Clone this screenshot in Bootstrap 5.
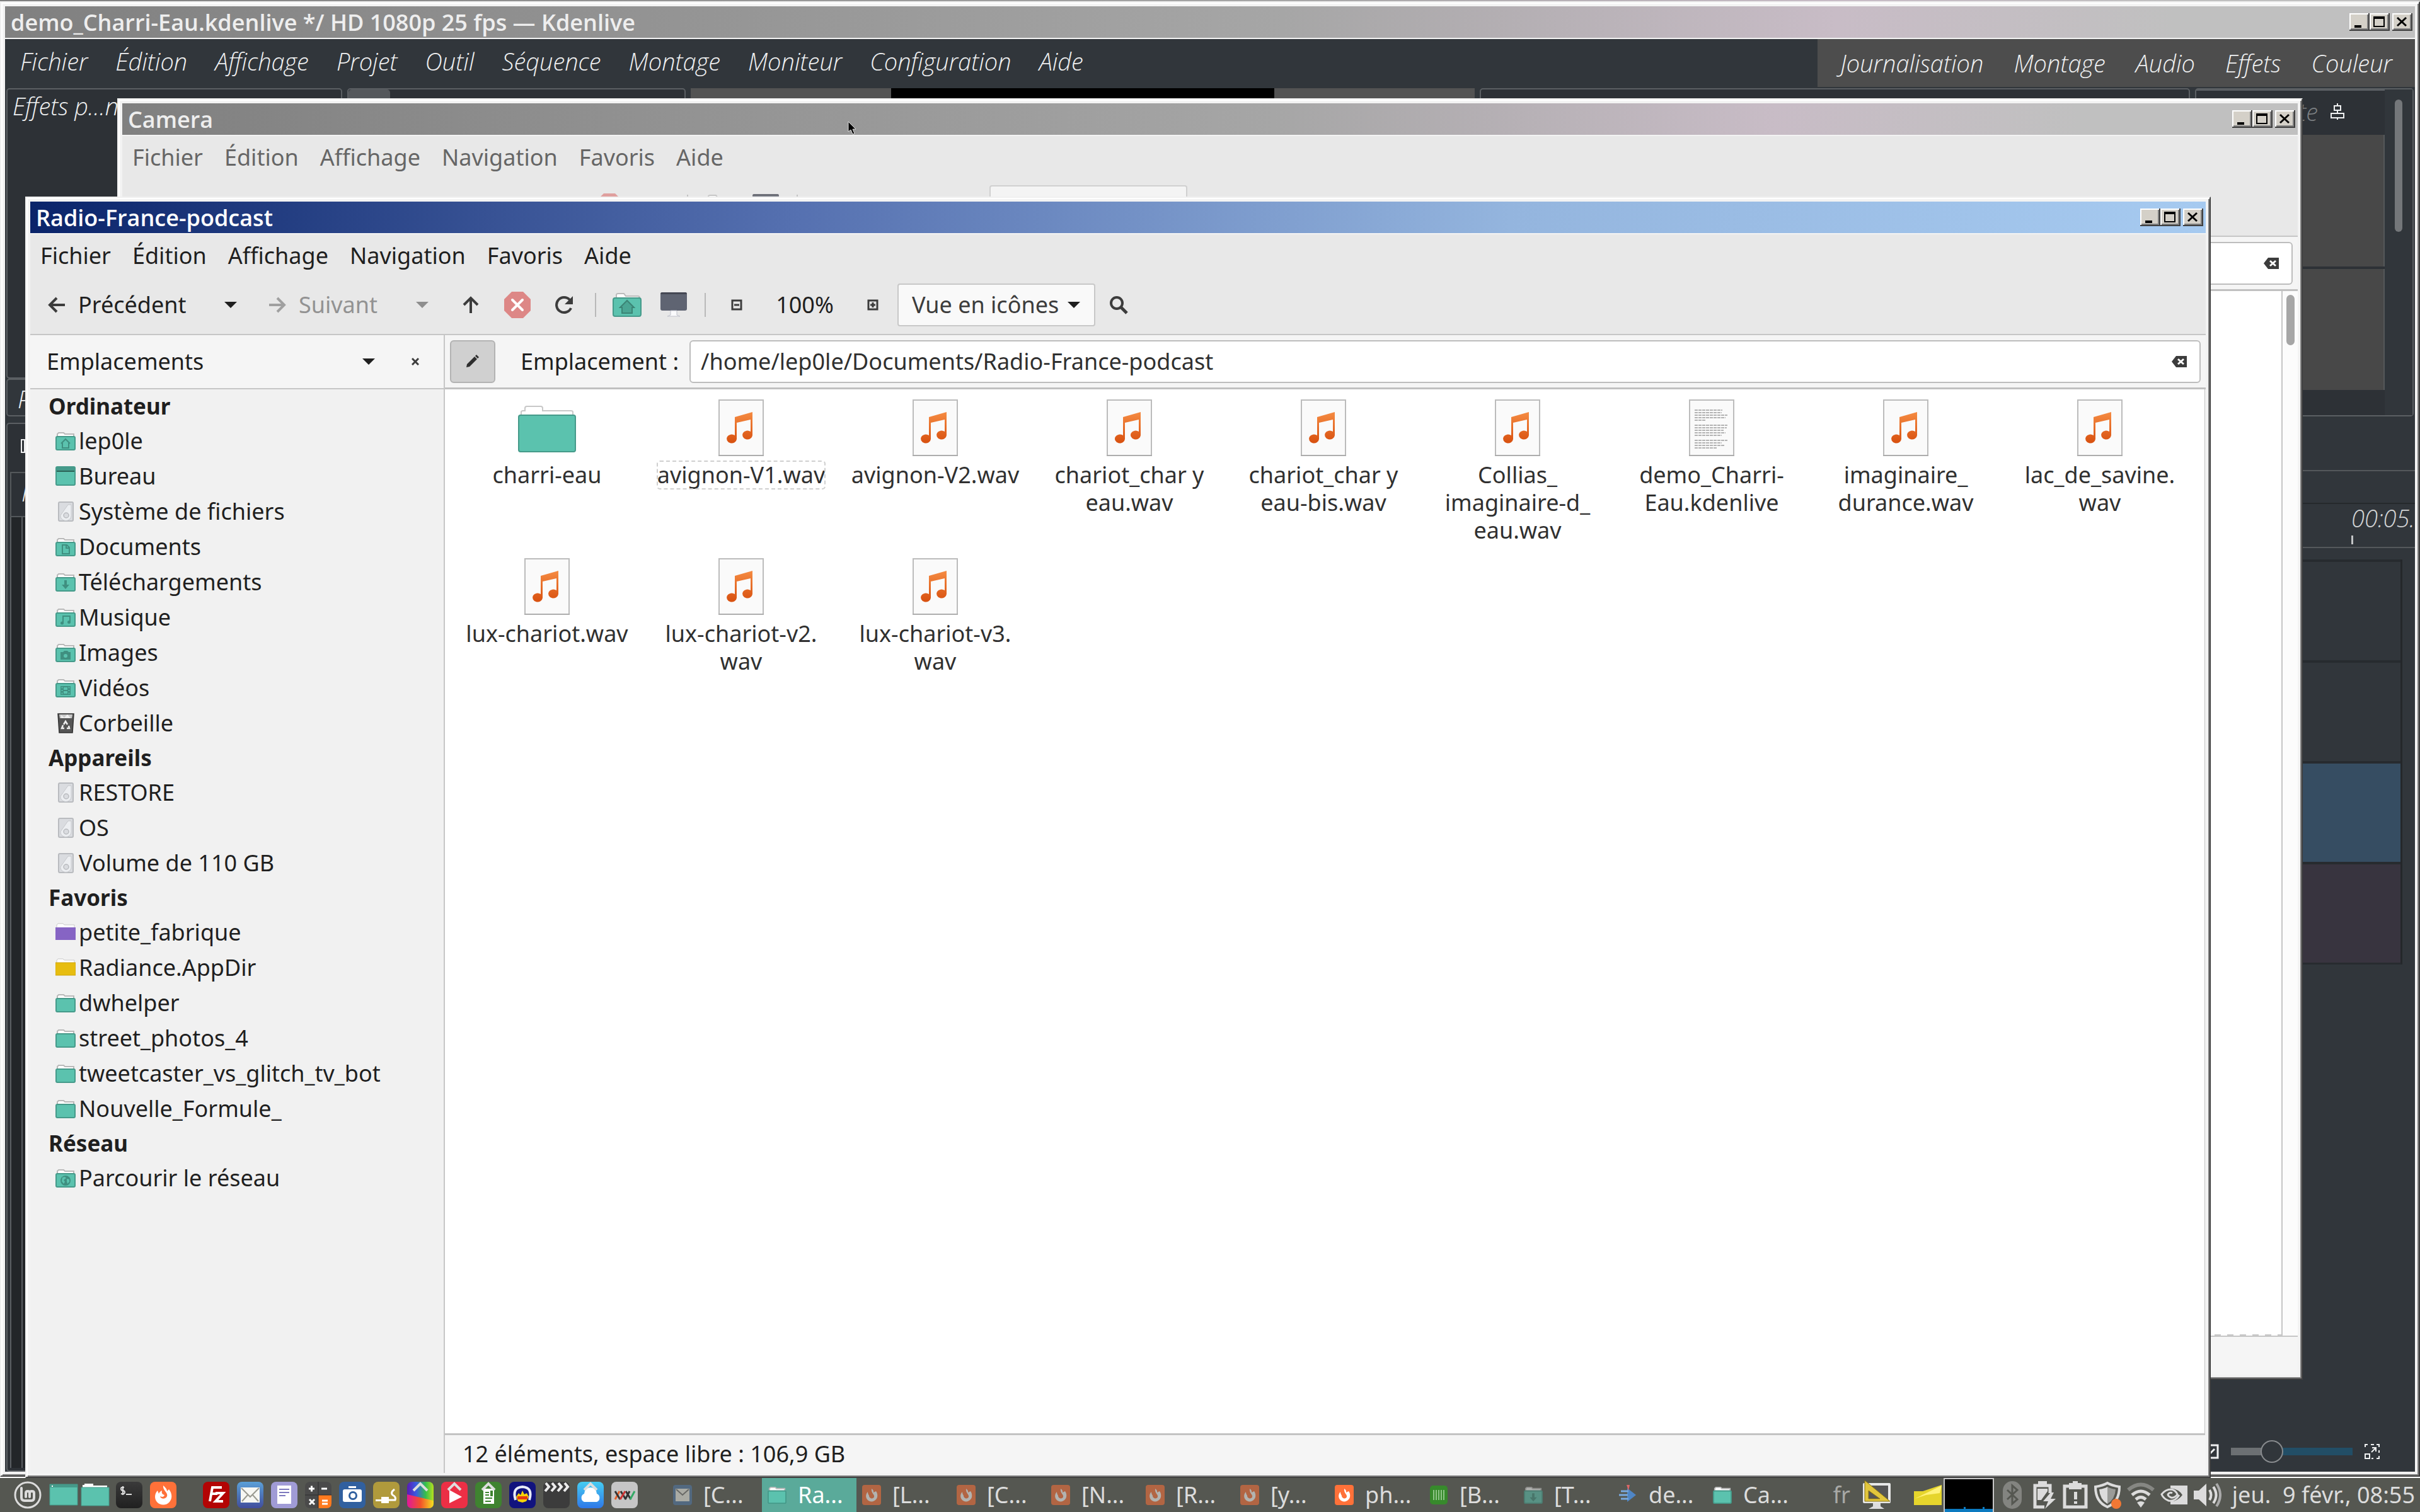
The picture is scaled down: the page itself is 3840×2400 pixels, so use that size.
<!DOCTYPE html>
<html lang="fr">
<head>
<meta charset="utf-8">
<meta name="viewport" content="width=device-width, initial-scale=1">
<title>Bureau</title>
<link href="https://cdn.jsdelivr.net/npm/bootstrap@5.3.0/dist/css/bootstrap.min.css" rel="stylesheet">
<style>
body { font-family: "Noto Sans", sans-serif; font-size: 36px; line-height: 44px; color: #1f1f1f; background: #555751; overflow: hidden; }
button, input, select { font: inherit; color: inherit; }
a { color: inherit; text-decoration: none; }
svg { display: block; flex: none; }
.desk { background: linear-gradient(90deg, #808080, #a6a6a6 53%, #c8bcc6 76%, #c0c0c0 90%); }
.deskline { height: 2px; background: #fff; }

/* window frame */
.win { position: absolute; border: 2px solid; border-color: #f0f0f0 #404040 #404040 #f0f0f0; background: #f3f3f3; padding: 6px; box-shadow: inset 2px 2px #fff, inset -2px -2px #808080; }
.win-kden { inset: 2px 0 2px 0; }
.win-camera { inset: 156px 186px 156px 186px; }
.win-radio { inset: 312px 332px 0 40px; }
.titlebar { height: 50px; padding: 0 4px 0 9px; margin-bottom: 2px; background: linear-gradient(90deg, #808080, #a6a6a6 53%, #c8bcc6 76%, #c0c0c0 90%); color: #eee; font-family: "Open Sans", sans-serif; font-weight: 600; font-size: 36px; }
.wintitle { padding-top: 2px; }
.win-radio .titlebar { background: linear-gradient(90deg, #0a246a, #5570b0 35%, #94b5de 68%, #a6caf0); color: #fff; }
.winbtn { border: 0; padding: 0; background: none; }

/* file manager */
.menus { height: 68px; gap: 34px; padding-left: 16px; background: #e8e8e8; }
.tools { height: 90px; background: #e8e8e8; padding-bottom: 2px; }
.tools button { border: 0; background: none; height: 68px; padding: 0; }
.tb { width: 74px; display: flex; align-items: center; justify-content: center; }
.tb-drop { width: 80px; }
.tb-prev { width: 278px; display: flex; align-items: center; gap: 20px; padding-left: 28px !important; }
.tb-next { width: 224px; display: flex; align-items: center; gap: 20px; padding-left: 20px !important; color: #929292; }
.tb-zoom { width: 142px; text-align: center; }
.tb-sep { width: 2px; height: 38px; margin: 0 12px; background: #b9b9b9; }
.view-box { width: 314px; margin-left: 2px; }
.view-box select { appearance: none; width: 100%; height: 68px; padding: 0 21px; border: 2px solid #c8c8c8; border-radius: 4px; background: #f9f9f9; color: #3c3c3c; }
.view-box svg { position: absolute; right: 24px; top: 29px; pointer-events: none; }
.paneline { border-top: 2px solid #c6c6c6; }
.side { width: 658px; border-right: 2px solid #c6c6c6; background: #f1f1f1; }
.side-head { height: 86px; background: #f5f5f5; border-bottom: 2px solid #c6c6c6; padding: 0 8px 0 26px; }
.side-head button { border: 0; background: none; padding: 0; display: flex; align-items: center; justify-content: center; width: 74px; height: 68px; }
.side h2 { font-size: 35px; font-weight: 700; line-height: 54px; margin: 0; padding-left: 29px; }
.side li a { display: flex; align-items: center; height: 56px; gap: 5px; padding-left: 40px; }
.side li svg { width: 32px; height: 32px; }
.loc { height: 86px; background: #f5f5f5; border-bottom: 3px solid #c0c0c0; padding: 0 8px; }
.loc-toggle { width: 72px; height: 68px; border: 2px solid #b3b3b3; border-radius: 6px; background: #d0d0d0; padding: 0; display: flex; align-items: center; justify-content: center; }
.loc label { width: 308px; padding-left: 40px; }
.loc-box { height: 68px; border: 2px solid #bdbdbd; border-radius: 6px; background: #fff; padding: 0 20px 0 16px; }
.loc-box input { border: 0; outline: 0; background: none; padding: 0; color: #303030; }
.loc-box button { border: 0; background: none; padding: 0; }
.pane { background: #fff; border-bottom: 3px solid #c3c3c3; border-right: 1px solid #c3c3c3; margin-right: 1px; }
.files { padding: 16px 0 0 8px; }
.file { width: 308px; height: 252px; color: #303030; text-align: center; }
.file svg { margin: 0 auto 8px; position: relative; }
.file span { display: inline-block; }
.file .focus { outline: 2px dashed #cfcfcf; outline-offset: -1px; border-radius: 4px; }
.status { height: 60px; line-height: 60px; background: #f5f5f5; padding-left: 28px; }
.win-camera .menus { color: #666; }
.win-camera .tools { opacity: .75; background: #e8e8e8; }
.scroll { width: 26px; border-left: 2px solid #c6c6c6; background: #fcfcfc; padding: 6px 5px 0 6px; }
.scroll i { display: block; height: 80px; border-radius: 7px; background: #a6a6a6; }
.dashline { height: 2px; background: repeating-linear-gradient(90deg, #c8c8c8 0 10px, #fff 10px 20px); }

/* video editor */
.kd { background: #31363b; color: #eff0f1; font-family: "Open Sans", sans-serif; font-style: italic; font-weight: 300; font-size: 38px; }
.kd-menus { gap: 44px; padding: 13px 0 0 24px; }
.kd-modes { height: 76px; gap: 48px; padding: 0 36px; background: #4d4d4d; }
.kd-upper { height: 523px; gap: 8px; padding: 2px 2px 0; }
.kd-panel { border: 2px solid #5b5f63; border-radius: 5px; background: #2d3136; }
.kd-left { width: 533px; }
.kd-grey { background: #535353; }
.kd-screen { width: 608px; background: #000; }
.kd-clip { width: 169px; margin-top: 14px; border: 3px solid #24272a; background: #31363b; }
.kd-right { width: 347px; }
.kd-right .tophead { height: 68px; padding-right: 64px; gap: 20px; color: #7b7f82; border-top: 2px solid #5b5f63; }
.kd-cell { background: #484848; border-right: 2px solid #55585a; height: 209px; }
.kd-thumb { width: 12px; height: 210px; border-radius: 6px; background: #74777a; }
.kd-track { height: 160px; border-top: 4px solid #272b2f; }
.kd-tracks { margin: 18px 20px 0 0; border-right: 3px solid #24272a; border-bottom: 3px solid #272b2f; }
.kd-ruler { height: 72px; border-top: 2px solid #25292c; border-bottom: 2px solid #54585b; color: #d3d5d6; }
.kd-tl { width: 720px; margin: 10px 0 0 2px; border: 2px solid #5b5f63; border-right: 0; border-radius: 5px; background: #2d3136; }
.kd-slider { width: 193px; height: 36px; appearance: none; margin: 0; background: linear-gradient(90deg, #6c7073 0 33%, #224e66 33%) center / 100% 12px no-repeat; }
.kd-slider::-webkit-slider-thumb { appearance: none; width: 36px; height: 36px; border-radius: 50%; border: 2px solid #888b8e; background: #31363b; }
.cursor { position: absolute; left: 1345px; top: 192px; }

/* taskbar */
.bar { height: 54px; background: #555751; color: #dcdcdc; padding: 0 8px 0 22px; }
.bar button { border: 0; background: none; padding: 0; }
.launch { gap: 12px; }
.tasks { margin-left: 47px; }
.task { width: 150px; height: 54px; display: flex; align-items: center; gap: 18px; padding-left: 9px !important; white-space: nowrap; text-align: left; }
.task.min svg { opacity: .55; }
.task.on { background: #5aaa9a; color: #fff; }
.tray { gap: 9px; }
</style>
</head>
<body class="d-flex flex-column vh-100">
<svg width="0" height="0" style="position:absolute" aria-hidden="true">
  <defs>
    <linearGradient id="gOr" x1="0" y1="0" x2="0" y2="1"><stop offset="0" stop-color="#f58b42"/><stop offset="1" stop-color="#d8500f"/></linearGradient>
    <linearGradient id="gRain" x1="0" y1="0" x2="1" y2="0"><stop offset="0" stop-color="#5a1bb5"/><stop offset=".35" stop-color="#3a5be0"/><stop offset=".7" stop-color="#35c04a"/><stop offset="1" stop-color="#b6e01f"/></linearGradient>
    <linearGradient id="gRain2" x1="0" y1="0" x2="1" y2="0"><stop offset="0" stop-color="#e0189a"/><stop offset=".5" stop-color="#f2502a"/><stop offset="1" stop-color="#f5e020"/></linearGradient>
    <linearGradient id="gDk" x1="0" y1="0" x2="0" y2="1"><stop offset="0" stop-color="#3a3a3a"/><stop offset="1" stop-color="#202020"/></linearGradient>
    <linearGradient id="gBl" x1="0" y1="0" x2="0" y2="1"><stop offset="0" stop-color="#5aa0d8"/><stop offset="1" stop-color="#414d9c"/></linearGradient>
    <linearGradient id="gSky" x1="0" y1="0" x2="0" y2="1"><stop offset="0" stop-color="#45cdf2"/><stop offset="1" stop-color="#2f78e8"/></linearGradient>
  </defs>
  <symbol id="min" viewBox="0 0 32 28"><path fill="#d4d0c8" d="M0 0h32v28H0z"/><path fill="#fff" d="M0 0h30v2H2v24H0z"/><path fill="#404040" d="M30 0h2v28H0v-2h30z"/><path fill="#808080" d="M28 2h2v24H2v-2h26z"/><path d="M8 19h11v4H8z"/></symbol>
  <symbol id="max" viewBox="0 0 32 28"><path fill="#d4d0c8" d="M0 0h32v28H0z"/><path fill="#fff" d="M0 0h30v2H2v24H0z"/><path fill="#404040" d="M30 0h2v28H0v-2h30z"/><path fill="#808080" d="M28 2h2v24H2v-2h26z"/><path d="M6 5h18v17H6zM8 9v11h14V9z" fill-rule="evenodd"/></symbol>
  <symbol id="cls" viewBox="0 0 32 28"><path fill="#d4d0c8" d="M0 0h32v28H0z"/><path fill="#fff" d="M0 0h30v2H2v24H0z"/><path fill="#404040" d="M30 0h2v28H0v-2h30z"/><path fill="#808080" d="M28 2h2v24H2v-2h26z"/><path stroke="#000" stroke-width="3" d="M8 7l14 13M22 7L8 20"/></symbol>
  <symbol id="folder" viewBox="0 0 32 32"><path fill="#fff" stroke="#b9b9b9" stroke-width="2" d="M3 10V5l2-2h8l2 2h14v5"/><rect x="1" y="9" width="30" height="21" rx="2" fill="#5bc2ae" stroke="#459a8a" stroke-width="2"/></symbol>
  <symbol id="f-purple" viewBox="0 0 32 32"><path fill="#fff" stroke="#c8c8c8" d="M2 8V4l2-2h8l2 2h16v4"/><path fill="#8664c4" d="M0 8h32v20H0z"/></symbol>
  <symbol id="f-gold" viewBox="0 0 32 32"><path fill="#fff" stroke="#c8c8c8" d="M2 8V4l2-2h8l2 2h16v4"/><path fill="#e7bd10" stroke="#cda40a" d="M0 8h32v20H0z"/></symbol>
  <symbol id="e-home" viewBox="0 0 32 32"><use href="#folder"/><path fill="none" stroke="#3f8f80" stroke-width="2" d="M9 20l7-7 7 7M11 19v8h10v-8"/></symbol>
  <symbol id="e-desk" viewBox="0 0 32 32"><rect x="1" y="1" width="30" height="29" rx="2" fill="#5bc2ae" stroke="#459a8a" stroke-width="2"/><path fill="#459a8a" d="M1 1h30v6H1z"/><path fill="#2c6458" d="M2 7h28v2H2z"/></symbol>
  <symbol id="e-doc" viewBox="0 0 32 32"><use href="#folder"/><path fill="none" stroke="#3f8f80" stroke-width="2" d="M11 13h7l4 4v10H11zM17 13v5h5"/></symbol>
  <symbol id="e-down" viewBox="0 0 32 32"><use href="#folder"/><path fill="#3f8f80" d="M14 13h4v7h4l-6 7-6-7h4z"/></symbol>
  <symbol id="e-mus" viewBox="0 0 32 32"><use href="#folder"/><path fill="none" stroke="#3f8f80" stroke-width="2" d="M12 25V14h11v9"/><circle cx="10.500" cy="25" r="2.500" fill="#3f8f80"/><circle cx="21.500" cy="23.500" r="2.500" fill="#3f8f80"/></symbol>
  <symbol id="e-img" viewBox="0 0 32 32"><use href="#folder"/><path fill="#3f8f80" d="M8 15h4l2-2h5l2 2h3v12H8z"/><circle cx="16" cy="21" r="3" fill="#5bc2ae"/></symbol>
  <symbol id="e-vid" viewBox="0 0 32 32"><use href="#folder"/><path fill="#3f8f80" d="M8 13h16v14H8z"/><path fill="#5bc2ae" d="M13 15h6v4h-6zM13 21h6v4h-6zM9.500 14.500h2v2h-2zM9.500 19h2v2h-2zM9.500 23.500h2v2h-2zM20.500 14.500h2v2h-2zM20.500 19h2v2h-2zM20.500 23.500h2v2h-2z"/></symbol>
  <symbol id="e-net" viewBox="0 0 32 32"><use href="#folder"/><circle cx="16" cy="20" r="8" fill="#3f8f80"/><path fill="#5bc2ae" d="M11 15l4-1 2 2-4 3 2 3-2 3-3-4zM18 17l4 1 0 4-3 3-1-4z"/></symbol>
  <symbol id="disk" viewBox="0 0 32 32"><rect x="5" y="1" width="23" height="30" rx="2" fill="#dadce0" stroke="#b9bbbf" stroke-width="2"/><path fill="#eceef1" stroke="#c6c8cc" d="M8 22L20 5h5v18a8 7 0 0 1-17 0z"/><circle cx="17" cy="22" r="4" fill="#dadce0" stroke="#b9bbbf" stroke-width="1.500"/></symbol>
  <symbol id="trash" viewBox="0 0 32 32"><path fill="#555" stroke="#333" stroke-width="1.500" d="M4 1h25l-2 30H6z"/><path fill="#c9c9c9" d="M6 2h21l-1 6H7z"/><path fill="#eee" d="M9 3l5 4 5-5 5 6H9z"/><path fill="none" stroke="#eee" stroke-width="2.500" d="M13 18l3-5 3 5M21 20l1 4h-4M14 24h-4l2-5"/></symbol>
  <symbol id="wav" viewBox="0 0 72 90"><rect x="1" y="1" width="70" height="88" fill="#fafafa" stroke="#bcbcbc" stroke-width="2"/><path fill="#adadad" d="M0 88h72v2H0z"/><path fill="url(#gOr)" d="M26 28l28-8v37a8 7 0 1 1-3-6V32l-22 5v26a8 7 0 1 1-3-6z"/></symbol>
  <symbol id="txt" viewBox="0 0 72 90"><rect x="1" y="1" width="70" height="88" fill="#fafafa" stroke="#bcbcbc" stroke-width="2"/><path fill="#adadad" d="M0 88h72v2H0z"/><path stroke="#b3b3b3" stroke-width="2" stroke-dasharray="5 1" d="M9 17h44M9 21h43M9 25h52M9 29h49M9 33h17M9 41h52M9 45h51M9 49h46M9 53h49M9 57h43M9 65h52M9 69h43M9 73h47M9 77h35"/></symbol>
  <symbol id="bigfolder" viewBox="0 0 92 90"><path fill="#fff" stroke="#c8c8c8" stroke-width="2" d="M5 26v-6q0-2 3-2h3v-4q0-3 3-3h22q3 0 3 3v4h45q3 0 3 2v6"/><rect x="1" y="25" width="90" height="58" rx="3" fill="#5bc2ae" stroke="#459a8a" stroke-width="2"/></symbol>
  <symbol id="tri" viewBox="0 0 20 10"><path fill="currentColor" d="M0 0h20L10 10z"/></symbol>
  <symbol id="stop" viewBox="0 0 42 42"><path fill="#dd8786" d="M12 0h18l12 12v18L30 42H12L0 30V12z"/><path stroke="#fff" stroke-width="4" stroke-linecap="round" d="M13 13l16 16M29 13L13 29"/></symbol>
  <symbol id="screen" viewBox="0 0 42 40"><rect x="0" y="1" width="42" height="28" rx="3" fill="#5f6472"/><path fill="#444753" d="M2 0h38q2 0 2 3H0q0-3 2-3z"/><path fill="#fafafc" stroke="#c0c2cc" d="M16 29h10v7l5 2H11l5-2z"/></symbol>
  <symbol id="homebig" viewBox="0 0 46 40"><path fill="#fff" stroke="#bbb" stroke-width="2" d="M6 9V4q0-2 3-2h9l3 4h19q3 0 3 3v3"/><rect x="1" y="9" width="44" height="29" rx="3" fill="#5bc2ae" stroke="#459a8a" stroke-width="2"/><path fill="#4aa593" stroke="#3b8475" stroke-width="2" d="M23 13L12 24h3v9h16v-9h3z"/></symbol>
  <symbol id="clear" viewBox="0 0 24 18"><path fill="#3c3c3c" d="M7 0h17v18H7L0 9z"/><path stroke="#fff" stroke-width="3" d="M10 5l9 8M19 5l-9 8"/></symbol>
  <symbol id="fox" viewBox="0 0 42 42"><rect width="42" height="42" rx="8" fill="#ff7139"/><path fill="#fff" d="M21 6c6 5 6 8 6 9l3-3c5 6 6 14 1 20-5 6-15 6-20 0-5-6-3-14 1-18l2 5c1-3 3-4 5-5-1 5 1 6 4 7-1 4-5 3-7 2 1 5 9 5 11 0 2-6-7-9-6-17z"/></symbol>
  <symbol id="foxmini" viewBox="0 0 30 32"><rect width="30" height="32" rx="4" fill="#ff7139"/><path fill="#fff" d="M15 6c4 3 3 5 3 6l4-2c3 4 3 10 0 13-4 5-11 4-14 0-3-4-2-9 1-12 0 3 1 4 2 6 0 5 7 6 8 2 1-4-5-6-4-13z"/></symbol>
</svg>

<main class="desk position-relative flex-grow-1 d-flex flex-column justify-content-end">
  <div class="deskline"></div>

  <section class="win win-kden d-flex flex-column" aria-label="Kdenlive">
    <header class="titlebar d-flex align-items-center flex-shrink-0">
      <div class="wintitle me-auto">demo_Charri-Eau.kdenlive */ HD 1080p 25 fps — Kdenlive</div>
      <button class="winbtn" aria-label="Réduire"><svg width="32" height="28"><use href="#min"/></svg></button>
      <button class="winbtn" aria-label="Agrandir"><svg width="32" height="28"><use href="#max"/></svg></button>
      <button class="winbtn ms-1" aria-label="Fermer"><svg width="32" height="28"><use href="#cls"/></svg></button>
    </header>
    <div class="kd flex-grow-1 d-flex flex-column">
      <div class="d-flex justify-content-between">
        <nav class="kd-menus d-flex"><a href="#">Fichier</a><a href="#">Édition</a><a href="#">Affichage</a><a href="#">Projet</a><a href="#">Outil</a><a href="#">Séquence</a><a href="#">Montage</a><a href="#">Moniteur</a><a href="#">Configuration</a><a href="#">Aide</a></nav>
        <nav class="kd-modes d-flex align-items-center"><a href="#">Journalisation</a><a href="#">Montage</a><a href="#">Audio</a><a href="#">Effets</a><a href="#">Couleur</a></nav>
      </div>
      <div class="kd-upper d-flex">
        <div class="kd-left d-flex flex-column">
          <div class="kd-panel px-2 pt-1 flex-grow-1">Effets p…n</div>
          <div class="kd-panel px-3 pt-2 pb-1" style="background:#31363b">P</div>
        </div>
        <div class="kd-panel d-flex align-items-start" style="width:537px"><svg width="533" height="16"><rect width="66" height="30" rx="5" fill="#54575b"/><path fill="#eff0f1" d="M94 14h33v2H94zM408 14h12v2h-12zM492 14h12v2h-12z"/></svg></div>
        <div class="kd-grey d-flex justify-content-center flex-grow-1"><div class="kd-screen"></div></div>
        <div class="kd-panel d-flex gap-4 px-2" style="width:1127px"><div class="kd-clip"></div><div class="kd-clip"></div><div class="kd-clip ms-auto"></div></div>
        <div class="kd-right kd-panel d-flex">
          <div class="flex-grow-1 d-flex flex-column gap-1">
            <div class="tophead d-flex align-items-center justify-content-end"><span>te</span><svg width="22" height="26" fill="none" stroke="#eff0f1" stroke-width="2"><path d="M6 4h10v7H6zM1 16h20v7H1zM11 0v4M11 11v5M11 23v3"/></svg></div>
            <div class="kd-cell"></div>
            <div class="kd-cell flex-grow-1 flex-shrink-1" style="height:auto;margin-bottom:40px"></div>
          </div>
          <div class="px-3 pt-3" style="background:#31363b"><div class="kd-thumb"></div></div>
        </div>
      </div>
      <div class="flex-grow-1 d-flex">
        <div class="kd-tl d-flex flex-column">
          <svg class="mt-4" width="60" height="52"><path fill="none" stroke="#eff0f1" stroke-width="2" d="M22 1h30v20H22zM27 1v20"/></svg>
          <div class="ms-1 px-3 pb-3 pt-2" style="border:2px solid #54585b;border-right:0">N</div>
          <div class="ms-1 mb-1 flex-grow-1" style="background:linear-gradient(90deg,#5b5f63 2px,#232629 2px 18px,#5b5f63 18px 20px,#232629 20px)"></div>
        </div>
        <div class="flex-grow-1 d-flex flex-column">
          <div style="height:87px;border-bottom:2px solid #54585b"></div>
          <div style="height:50px"></div>
          <div class="kd-ruler d-flex justify-content-end overflow-hidden"><div class="d-flex flex-column"><span>00:05.</span><svg width="3" height="20"><path fill="#c3c5c6" d="M0 6h3v14H0z"/></svg></div></div>
          <div class="kd-tracks"><div class="kd-track"></div><div class="kd-track"></div><div class="kd-track" style="background:#364d62"></div><div class="kd-track" style="background:#38343f"></div></div>
          <div class="mt-auto d-flex align-items-center justify-content-end" style="height:64px;gap:19px;padding-right:56px">
            <svg width="24" height="24" fill="none" stroke="#eff0f1" stroke-width="3"><path d="M2 2h20v20H2M17 8l-8 8"/></svg>
            <input class="kd-slider" type="range" min="0" max="100" value="30" aria-label="Zoom">
            <svg width="24" height="24" fill="none" stroke="#eff0f1" stroke-width="2"><path d="M1 16h7v7H1zM1 5V1h4M10 1h5M19 1h4v4M23 10v4M23 19v4h-4M14 23h-3M11 13l6-6M12 6h6v6"/></svg>
          </div>
        </div>
      </div>
    </div>
  </section>

  <section class="win win-camera d-flex flex-column" aria-label="Camera">
    <header class="titlebar d-flex align-items-center flex-shrink-0">
      <div class="wintitle me-auto">Camera</div>
      <button class="winbtn" aria-label="Réduire"><svg width="32" height="28"><use href="#min"/></svg></button>
      <button class="winbtn" aria-label="Agrandir"><svg width="32" height="28"><use href="#max"/></svg></button>
      <button class="winbtn ms-1" aria-label="Fermer"><svg width="32" height="28"><use href="#cls"/></svg></button>
    </header>
    <nav class="menus d-flex align-items-center flex-shrink-0"><a href="#">Fichier</a><a href="#">Édition</a><a href="#">Affichage</a><a href="#">Navigation</a><a href="#">Favoris</a><a href="#">Aide</a></nav>
    <div style="background:#e8e8e8"><div class="tools d-flex align-items-center">
      <span class="tb-prev"></span><span class="tb-drop"></span><span class="tb-next"></span><span class="tb-drop"></span><span class="tb"></span>
      <span class="tb"><svg width="42" height="42"><use href="#stop"/></svg></span><span class="tb"></span><span class="tb-sep"></span>
      <span class="tb"><svg width="46" height="40"><use href="#homebig"/></svg></span>
      <span class="tb"><svg width="42" height="40"><use href="#screen"/></svg></span>
      <span class="tb-sep"></span><span class="tb"></span><span class="tb-zoom"></span><span class="tb"></span>
      <div class="view-box"><select aria-label="Vue"><option></option></select></div>
    </div></div>
    <div class="paneline flex-grow-1 d-flex flex-column">
      <div class="loc d-flex align-items-center">
        <div class="loc-box flex-grow-1 d-flex align-items-center justify-content-end"><button aria-label="Effacer"><svg width="24" height="18"><use href="#clear"/></svg></button></div>
      </div>
      <div class="flex-grow-1 d-flex bg-white" style="border-bottom:2px solid #c6c6c6">
        <div class="flex-grow-1 d-flex flex-column justify-content-end"><div class="dashline"></div></div>
        <div class="scroll"><i></i></div>
      </div>
      <div class="status"></div>
    </div>
  </section>
  <svg class="cursor" width="14" height="22"><path stroke="#ddd" d="M1 1v16l4-3 3 7 3-1-3-7h5z"/></svg>

  <section class="win win-radio d-flex flex-column" aria-label="Radio-France-podcast">
    <header class="titlebar d-flex align-items-center flex-shrink-0">
      <div class="wintitle me-auto">Radio-France-podcast</div>
      <button class="winbtn" aria-label="Réduire"><svg width="32" height="28"><use href="#min"/></svg></button>
      <button class="winbtn" aria-label="Agrandir"><svg width="32" height="28"><use href="#max"/></svg></button>
      <button class="winbtn ms-1" aria-label="Fermer"><svg width="32" height="28"><use href="#cls"/></svg></button>
    </header>
    <nav class="menus d-flex align-items-center flex-shrink-0"><a href="#">Fichier</a><a href="#">Édition</a><a href="#">Affichage</a><a href="#">Navigation</a><a href="#">Favoris</a><a href="#">Aide</a></nav>
    <div class="tools d-flex align-items-center flex-shrink-0">
      <button class="tb-prev"><svg width="28" height="28" fill="none" stroke="#3c3c3c" stroke-width="4"><path d="M14 3L3 14l11 11M3 14h24"/></svg>Précédent</button>
      <button class="tb tb-drop" aria-label="Historique précédent"><svg width="20" height="10"><use href="#tri"/></svg></button>
      <button class="tb-next"><svg width="28" height="28" fill="none" stroke="#a0a0a0" stroke-width="4"><path d="M14 3l11 11-11 11M1 14h24"/></svg>Suivant</button>
      <button class="tb tb-drop" style="color:#8e8e8e" aria-label="Historique suivant"><svg width="20" height="10"><use href="#tri"/></svg></button>
      <button class="tb" aria-label="Dossier parent"><svg width="28" height="28" fill="none" stroke="#3c3c3c" stroke-width="4"><path d="M3 14L14 3l11 11M14 3v24"/></svg></button>
      <button class="tb" aria-label="Arrêter"><svg width="42" height="42"><use href="#stop"/></svg></button>
      <button class="tb" aria-label="Actualiser"><svg width="30" height="30" fill="none" stroke="#3c3c3c" stroke-width="4"><path d="M24 7a12 12 0 1 0 2 13"/><path fill="#3c3c3c" stroke="none" d="M29 1v13H16z"/></svg></button>
      <span class="tb-sep"></span>
      <button class="tb" aria-label="Dossier personnel"><svg width="46" height="40"><use href="#homebig"/></svg></button>
      <button class="tb" aria-label="Ordinateur"><svg width="42" height="40"><use href="#screen"/></svg></button>
      <span class="tb-sep"></span>
      <button class="tb" aria-label="Zoom arrière"><svg width="18" height="18" fill="none" stroke="#3c3c3c" stroke-width="3"><path d="M2 2h14v14H2zM5 9h8"/></svg></button>
      <span class="tb-zoom">100%</span>
      <button class="tb" aria-label="Zoom avant"><svg width="18" height="18" fill="none" stroke="#3c3c3c" stroke-width="3"><path d="M2 2h14v14H2zM5 9h8M9 5v8"/></svg></button>
      <div class="view-box position-relative"><select aria-label="Vue"><option>Vue en icônes</option></select><svg width="20" height="10"><use href="#tri"/></svg></div>
      <button class="tb" aria-label="Rechercher"><svg width="30" height="30" fill="none" stroke="#3c3c3c" stroke-width="4"><circle cx="12" cy="12" r="9"/><path stroke-width="5" d="M18 18l10 10"/></svg></button>
    </div>
    <div class="paneline flex-grow-1 d-flex">
      <aside class="side flex-shrink-0">
        <div class="side-head d-flex align-items-center"><div class="me-auto">Emplacements</div>
          <button aria-label="Choisir le panneau"><svg width="20" height="10"><use href="#tri"/></svg></button>
          <button aria-label="Fermer le panneau"><svg width="12" height="12" stroke="#3c3c3c" stroke-width="3"><path d="M1 1l10 10M11 1L1 11"/></svg></button></div>
        <h2>Ordinateur</h2>
        <ul class="list-unstyled m-0">
          <li><a href="#"><svg><use href="#e-home"/></svg>lep0le</a></li>
          <li><a href="#"><svg><use href="#e-desk"/></svg>Bureau</a></li>
          <li><a href="#"><svg><use href="#disk"/></svg>Système de fichiers</a></li>
          <li><a href="#"><svg><use href="#e-doc"/></svg>Documents</a></li>
          <li><a href="#"><svg><use href="#e-down"/></svg>Téléchargements</a></li>
          <li><a href="#"><svg><use href="#e-mus"/></svg>Musique</a></li>
          <li><a href="#"><svg><use href="#e-img"/></svg>Images</a></li>
          <li><a href="#"><svg><use href="#e-vid"/></svg>Vidéos</a></li>
          <li><a href="#"><svg><use href="#trash"/></svg>Corbeille</a></li>
        </ul>
        <h2>Appareils</h2>
        <ul class="list-unstyled m-0">
          <li><a href="#"><svg><use href="#disk"/></svg>RESTORE</a></li>
          <li><a href="#"><svg><use href="#disk"/></svg>OS</a></li>
          <li><a href="#"><svg><use href="#disk"/></svg>Volume de 110 GB</a></li>
        </ul>
        <h2>Favoris</h2>
        <ul class="list-unstyled m-0">
          <li><a href="#"><svg><use href="#f-purple"/></svg>petite_fabrique</a></li>
          <li><a href="#"><svg><use href="#f-gold"/></svg>Radiance.AppDir</a></li>
          <li><a href="#"><svg><use href="#folder"/></svg>dwhelper</a></li>
          <li><a href="#"><svg><use href="#folder"/></svg>street_photos_4</a></li>
          <li><a href="#"><svg><use href="#folder"/></svg>tweetcaster_vs_glitch_tv_bot</a></li>
          <li><a href="#"><svg><use href="#folder"/></svg>Nouvelle_Formule_</a></li>
        </ul>
        <h2>Réseau</h2>
        <ul class="list-unstyled m-0"><li><a href="#"><svg><use href="#e-net"/></svg>Parcourir le réseau</a></li></ul>
      </aside>
      <div class="flex-grow-1 d-flex flex-column">
        <div class="loc d-flex align-items-center">
          <button class="loc-toggle" aria-label="Modifier le chemin"><svg width="24" height="24"><path fill="#2e2e2e" d="M3 16L15 4l4 4L7 20l-5 1zM16 3l2-2 4 4-2 2z"/></svg></button>
          <label for="path">Emplacement :</label>
          <div class="loc-box flex-grow-1 d-flex align-items-center"><input id="path" class="flex-grow-1" value="/home/lep0le/Documents/Radio-France-podcast"><button aria-label="Effacer"><svg width="24" height="18"><use href="#clear"/></svg></button></div>
        </div>
        <div class="pane flex-grow-1">
          <div class="files d-flex flex-wrap">
            <a class="file" href="#"><svg width="92" height="90"><use href="#bigfolder"/></svg><span>charri-eau</span></a>
            <a class="file" href="#"><svg width="72" height="90"><use href="#wav"/></svg><span class="focus">avignon-V1.wav</span></a>
            <a class="file" href="#"><svg width="72" height="90"><use href="#wav"/></svg><span>avignon-V2.wav</span></a>
            <a class="file" href="#"><svg width="72" height="90"><use href="#wav"/></svg><span>chariot_char y<br>eau.wav</span></a>
            <a class="file" href="#"><svg width="72" height="90"><use href="#wav"/></svg><span>chariot_char y<br>eau-bis.wav</span></a>
            <a class="file" href="#"><svg width="72" height="90"><use href="#wav"/></svg><span>Collias_<br>imaginaire-d_<br>eau.wav</span></a>
            <a class="file" href="#"><svg width="72" height="90"><use href="#txt"/></svg><span>demo_Charri-<br>Eau.kdenlive</span></a>
            <a class="file" href="#"><svg width="72" height="90"><use href="#wav"/></svg><span>imaginaire_<br>durance.wav</span></a>
            <a class="file" href="#"><svg width="72" height="90"><use href="#wav"/></svg><span>lac_de_savine.<br>wav</span></a>
            <a class="file" href="#"><svg width="72" height="90"><use href="#wav"/></svg><span>lux-chariot.wav</span></a>
            <a class="file" href="#"><svg width="72" height="90"><use href="#wav"/></svg><span>lux-chariot-v2.<br>wav</span></a>
            <a class="file" href="#"><svg width="72" height="90"><use href="#wav"/></svg><span>lux-chariot-v3.<br>wav</span></a>
          </div>
        </div>
        <div class="status">12 éléments, espace libre : 106,9 GB</div>
      </div>
    </div>
  </section>
</main>

<footer class="bar d-flex align-items-center flex-shrink-0">
  <div class="launch d-flex align-items-center">
    <button aria-label="Menu"><svg width="44" height="44" fill="none" stroke="#dcdcdc"><circle cx="22" cy="22" r="20" stroke-width="3"/><path stroke-width="4" stroke-linecap="round" d="M12 11v15q0 5 5 5h11q4 0 4-5v-7q0-3-3.500-3T25 19v6M25 19q0-3-3-3t-3 3v6"/></svg></button>
    <button aria-label="Bureau"><svg width="46" height="36"><path fill="#5bc2ae" stroke="#459a8a" d="M1 1h44v33H1z"/><path fill="#459a8a" d="M1 1h44v5H1z"/><path fill="#fff" d="M4 3h2v2H4z"/></svg></button>
    <button style="margin-left:-8px" aria-label="Fichiers"><svg width="46" height="40"><path fill="#fff" d="M3 8V4h3V2h14v3h22v4z"/><path fill="#5bc2ae" stroke="#459a8a" d="M1 8h44v29H1z"/></svg></button>
    <button style="margin-left:-2px" aria-label="Terminal"><svg width="42" height="42"><rect width="42" height="42" rx="8" fill="url(#gDk)"/><path fill="none" stroke="#ddd" stroke-width="2" d="M13 9q-5-1-5 2t3 3 3 3-6 2M11 7v14M16 20h9"/></svg></button>
    <button aria-label="Firefox"><svg width="42" height="42"><use href="#fox"/></svg></button>
    <button style="margin-left:30px" aria-label="FileZilla"><svg width="42" height="42"><rect width="42" height="42" rx="8" fill="#b30404"/><path fill="none" stroke="#fff" stroke-width="4" d="M11 31l4-22h15M13 19h10M20 18h12L20 31h12"/></svg></button>
    <button aria-label="Courriel"><svg width="42" height="42"><rect width="42" height="42" rx="8" fill="url(#gBl)"/><path fill="#f7f7f3" d="M6 9h30v24H6z"/><path fill="none" stroke="#9a9a90" stroke-width="2" d="M7 10l14 14L35 10M8 31l9-10M34 31l-9-10"/></svg></button>
    <button aria-label="Notes"><svg width="42" height="42"><rect width="42" height="42" rx="8" fill="#a09bd6"/><path fill="#fff" d="M10 6h22v29H10z"/><path stroke="#7d78bd" stroke-width="2" d="M13 12h16M13 17h16M13 22h10"/></svg></button>
    <button aria-label="Calculatrice"><svg width="42" height="42"><rect width="42" height="42" rx="8" fill="#4a4a4a"/><path fill="#ff7a1f" d="M21 21h21v13q0 8-8 8H21z"/><path fill="none" stroke="#fff" stroke-width="3" d="M6 11h9M10.500 6.500v9M26 11h9M7 28l8 8M15 28l-8 8M27 30h9M27 35h9"/><path stroke="#2c2c2c" d="M21 0v42M0 21h42"/></svg></button>
    <button aria-label="Capture"><svg width="42" height="42"><rect width="42" height="42" rx="8" fill="#31609f"/><rect x="6" y="12" width="30" height="20" rx="3" fill="#fff"/><path fill="#fff" d="M15 7h12v3H15z"/><circle cx="22" cy="22" r="7" fill="#31609f"/><circle cx="22" cy="22" r="4" fill="#fff"/></svg></button>
    <button aria-label="Outils"><svg width="42" height="42"><rect width="42" height="42" rx="8" fill="#b09a3c"/><path fill="#fff" d="M4 28h9v-4h12v10H13v-3H4z"/><path fill="none" stroke="#fff" stroke-width="3" d="M25 29h10q2-5-4-8-4-4 3-9"/></svg></button>
    <button aria-label="Photos"><svg width="42" height="42"><rect width="42" height="42" rx="8" fill="url(#gRain)"/><path fill="url(#gRain2)" d="M0 20L42 30v4q0 8-8 8H8q-8 0-8-8z"/><path fill="none" stroke="#ddd" stroke-width="4" d="M10 14L21 3l11 11"/></svg></button>
    <button aria-label="Vidéo"><svg width="42" height="42"><rect width="42" height="42" rx="8" fill="#ec2f45"/><path fill="#fff" d="M13 13l20 11-20 10z"/><path fill="none" stroke="#ddd" stroke-width="4" d="M11 13L21 3l10 10"/></svg></button>
    <button aria-label="Writer"><svg width="42" height="42"><rect width="42" height="42" rx="8" fill="#3f8330"/><path fill="#fff" d="M13 11h17v24H13z"/><path stroke="#3f8330" stroke-width="2" d="M16 17h6M16 21h6M16 26h11M16 31h9"/><path fill="#3f8330" d="M24 14h4v9h-4z"/><path fill="none" stroke="#ddd" stroke-width="4" d="M11 13L21 3l10 10"/></svg></button>
    <button aria-label="Audacity"><svg width="42" height="42"><rect width="42" height="42" rx="8" fill="#11137e"/><path fill="#f7d308" d="M11 24l4-6 3 3 3-7 3 6 4-2 3 6-4 7-6 2-7-2z"/><path fill="#e63a12" d="M13 23h16v5H13z"/><path fill="none" stroke="#e8ecf8" stroke-width="4" d="M10 29Q4 9 21 8q17 1 11 21"/></svg></button>
    <button aria-label="Montage"><svg width="42" height="42"><rect width="42" height="42" rx="8" fill="#3c3c3c"/><path fill="none" stroke="#ececec" stroke-width="4" d="M4 2l5 6-6 7M14 2l5 6-6 7M24 2l5 6-6 7M34 2l5 6-6 7"/></svg></button>
    <button aria-label="Nuage"><svg width="42" height="42"><rect width="42" height="42" rx="8" fill="url(#gSky)"/><path fill="#fff" d="M11 32a7 7 0 0 1 0-13 10 10 0 0 1 20 0 7 7 0 0 1 0 13z"/><path fill="none" stroke="#ddd" stroke-width="4" d="M11 13L21 3l10 10"/></svg></button>
    <button aria-label="Mixage"><svg width="42" height="42"><rect width="42" height="42" rx="8" fill="#c6c6c6"/><g stroke-width="3"><path stroke="#e8622c" d="M6 28l7-13"/><path stroke="#333" d="M6 15l8 13M15 15l8 13M23 15l8 13"/><path stroke="#c33" d="M14 28l8-13"/><path stroke="#333" d="M22 28l7-13"/><path stroke="#3a6" d="M30 28l7-13"/></g></svg></button>
  </div>
  <div class="tasks d-flex">
    <button class="task min"><svg width="30" height="32"><rect width="30" height="32" rx="4" fill="#5078a8"/><path fill="#f0f0e8" d="M4 6h22v20H4z"/><path fill="none" stroke="#777" stroke-width="2" d="M5 7l10 9 10-9"/></svg>[C...</button>
    <button class="task on"><svg width="30" height="32"><use href="#folder"/></svg>Ra...</button>
    <button class="task min"><svg width="30" height="32"><use href="#foxmini"/></svg>[L...</button>
    <button class="task min"><svg width="30" height="32"><use href="#foxmini"/></svg>[C...</button>
    <button class="task min"><svg width="30" height="32"><use href="#foxmini"/></svg>[N...</button>
    <button class="task min"><svg width="30" height="32"><use href="#foxmini"/></svg>[R...</button>
    <button class="task min"><svg width="30" height="32"><use href="#foxmini"/></svg>[y...</button>
    <button class="task"><svg width="30" height="32"><use href="#foxmini"/></svg>ph...</button>
    <button class="task"><svg width="30" height="32"><rect x="1" y="1" width="28" height="30" rx="5" fill="#378a2c"/><path stroke="#8dc486" stroke-width="2" d="M7 8v16M11 8v16M15 8v16M19 8v16M23 8v16"/></svg>[B...</button>
    <button class="task min"><svg width="30" height="32"><use href="#e-down"/></svg>[T...</button>
    <button class="task"><svg width="30" height="32"><path fill="#4f86c6" d="M14 5l14 11-14 11z"/><path stroke="#78a9e0" stroke-width="3" d="M4 10h12M1 16h14M4 22h12"/><path fill="#d66" d="M13 0h5l-2 9z"/></svg>de...</button>
    <button class="task"><svg width="30" height="32"><use href="#folder"/></svg>Ca...</button>
  </div>
  <div class="tray d-flex align-items-center ms-auto">
    <span style="color:#a8a9a6">fr</span>
    <svg width="58" height="48"><rect x="11" y="5" width="44" height="32" rx="2" fill="#e8e8e8"/><path fill="#555" d="M15 9h36v24H15z"/><path fill="#ddd" d="M27 37h12v5l6 4H20l7-4z"/><path fill="#e2c63c" stroke="#8a7515" d="M14 1v33h40zM20 17l18 13H20z" fill-rule="evenodd"/></svg>
    <svg class="ms-4" width="46" height="36"><path fill="#e6d52c" d="M1 12h14L45 2v32H1z"/><path fill="#fff27a" d="M2 24L45 3l-3 12-22 3z"/></svg>
    <svg style="margin-left:-7px" width="80" height="54"><rect x="1" y="1" width="78" height="54" fill="#000" stroke="#c8c8c8" stroke-width="2"/><path fill="#0c7ac0" d="M2 49h30v-3h3v3h27v-3h3v3h13v5H2z"/></svg>
    <svg class="ms-1" width="34" height="44"><rect x="1" y="0" width="30" height="44" rx="15" fill="#838480"/><path fill="none" stroke="#555751" stroke-width="3" d="M8 14l16 15-8 7V7l8 7L8 29"/></svg>
    <svg class="ms-1" width="40" height="44"><path fill="none" stroke="#dcdcdc" stroke-width="5" d="M20 41H5V7h24v12"/><path fill="#dcdcdc" d="M10 0h14v6H10zM30 18L18 32h8l-5 12 17-16h-8l5-10zM9 12h16v4l-10 14H9z"/></svg>
    <svg width="40" height="44"><path fill="none" stroke="#dcdcdc" stroke-width="5" d="M3 8h34v33H3z"/><path fill="#dcdcdc" d="M10 3h20v10H10zM16 0h8v6h-8zM18 17h5v12h-5zM18 32h5v4h-5z"/></svg>
    <svg width="44" height="44"><path fill="none" stroke="#dcdcdc" stroke-width="4" d="M22 3Q15 7 3 9q0 24 19 32 19-8 19-32Q29 7 22 3z"/><path fill="#dcdcdc" d="M22 9Q17 12 9 13q1 16 13 23z"/><path fill="#9a9b98" d="M22 9q5 3 13 4-1 16-13 23z"/><circle cx="36" cy="36" r="8" fill="#f27835"/></svg>
    <svg width="44" height="42" fill="none"><path stroke="#868783" stroke-width="6" d="M2 13q20-17 40 0"/><path stroke="#dcdcdc" stroke-width="5" d="M8 21q14-12 28 0M14 28q8-7 16 0"/><path fill="#dcdcdc" d="M16 33q6-4 12 0l-6 8z"/></svg>
    <svg width="44" height="32"><path fill="#dcdcdc" d="M16 1h27v30H16v-5h5q9-3 14-10Q30 7 16 5z"/><path fill="none" stroke="#dcdcdc" stroke-width="3" d="M30 16q-7 11-17 9Q5 22 2 15 8 7 17 7q7 1 10 8-4 6-10 5-5-2-5-5 3-4 7-2"/></svg>
    <svg width="44" height="40"><path fill="#dcdcdc" d="M0 13h8L20 2v36L8 27H0z"/><path fill="none" stroke="#dcdcdc" stroke-width="4" d="M25 12q5 8 0 16M31 7q9 13 0 26"/><path fill="none" stroke="#aaa" stroke-width="4" d="M36 2q12 18 0 36"/></svg>
    <span class="ms-2">jeu.&nbsp; 9 févr., 08:55</span>
  </div>
</footer>
<script src="https://cdn.jsdelivr.net/npm/bootstrap@5.3.0/dist/js/bootstrap.bundle.min.js"></script>
</body>
</html>
